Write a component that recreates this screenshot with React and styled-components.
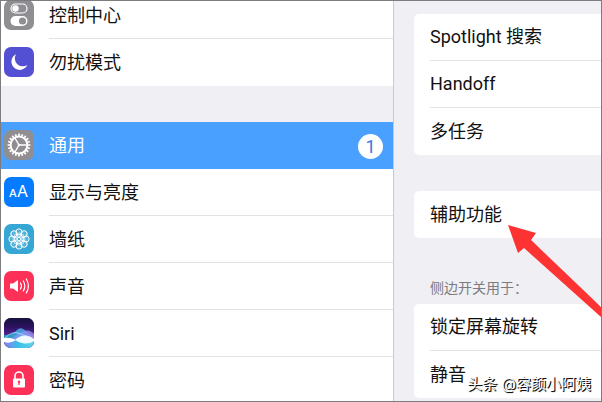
import React from "react";
import styled, { createGlobalStyle } from "styled-components";

const sidebarGroups = [
    [
        { id: "control", title: "控制中心", icon: ControlIcon, color: "#8f8e93" },
        { id: "dnd", title: "勿扰模式", icon: MoonIcon, color: "#5450d3" },
    ],
    [
        { id: "general", title: "通用", icon: GearIcon, color: "#918e92", badge: 1 },
        { id: "display", title: "显示与亮度", icon: DisplayIcon, color: "#057bff" },
        { id: "wallpaper", title: "墙纸", icon: WallpaperIcon, color: "#36a6d4" },
        { id: "sound", title: "声音", icon: SoundIcon, color: "#fd3058" },
        { id: "siri", title: "Siri", icon: SiriIcon, color: "#14103a" },
        { id: "passcode", title: "密码", icon: LockIcon, color: "#fd3058" },
    ],
];

const detailGroups = [
    { items: ["Spotlight 搜索", "Handoff", "多任务"] },
    { items: ["辅助功能"] },
    { caption: "侧边开关用于：", items: ["锁定屏幕旋转", "静音"] },
];

export default function App() {
    return (
        <>
            <GlobalStyle />
            <Screen>
                <Sidebar>
                    {sidebarGroups.map((group, index) => (
                        <SidebarGroup key={index}>
                            {group.map((item) => (
                                <SidebarItem key={item.id} item={item} selected={item.id === "general"} />
                            ))}
                        </SidebarGroup>
                    ))}
                </Sidebar>
                <Detail>
                    {detailGroups.map((group, index) => (
                        <section key={index}>
                            {group.caption ? <Caption>{group.caption}</Caption> : <Spacer $first={index === 0} />}
                            <Card>
                                {group.items.map((title) => (
                                    <CardRow key={title} href="#">{title}</CardRow>
                                ))}
                            </Card>
                        </section>
                    ))}
                </Detail>
                <Arrow viewBox="0 0 94 94" aria-hidden="true">
                    <path d="M0 1 L28 9 L23 16 L94 84 V94 L16 24 L10 29 Z" fill="#fd3233" />
                </Arrow>
                <Watermark>头条 @容颜小阿姨</Watermark>
            </Screen>
        </>
    );
}

function SidebarItem({ item, selected }) {
    const Icon = item.icon;
    return (
        <ItemLink href={`#${item.id}`} $selected={selected} aria-current={selected ? "page" : undefined}>
            <IconBox $color={item.color}>
                <Icon />
            </IconBox>
            <ItemBody>
                <span>{item.title}</span>
                {item.badge && <Badge>{item.badge}</Badge>}
            </ItemBody>
        </ItemLink>
    );
}

function ControlIcon() {
    return (
        <svg viewBox="0 0 30 30" fill="none" stroke="#fff">
            <rect x="7" y="4" width="16" height="9" rx="4.5" strokeWidth="1.2" />
            <circle cx="11.5" cy="8.5" r="3.2" fill="#fff" stroke="none" />
            <rect x="6.5" y="16" width="17" height="10" rx="5" fill="#fff" stroke="none" />
            <circle cx="18.5" cy="21" r="3.6" fill="#8f8e93" stroke="none" />
        </svg>
    );
}

function MoonIcon() {
    return (
        <svg viewBox="0 0 30 30">
            <path d="M12 7.2 A8.3 8.3 0 1 0 23.3 18 A8 8 0 0 1 12 7.2 Z" fill="#fff" />
        </svg>
    );
}

function GearIcon() {
    const teeth = Array.from({ length: 20 }, (_, i) => i * 18);
    return (
        <svg viewBox="0 0 30 30" fill="none" stroke="#fff">
            {teeth.map((angle) => (
                <path key={angle} d="M15 3.6 V6" strokeWidth="1.7" transform={`rotate(${angle} 15 15)`} />
            ))}
            <circle cx="15" cy="15" r="8.4" strokeWidth="2" />
            {[90, 210, 330].map((angle) => (
                <path key={angle} d="M15 15 V7" strokeWidth="1.3" transform={`rotate(${angle} 15 15)`} />
            ))}
            <circle cx="15" cy="15" r="1.3" fill="#fff" stroke="none" />
        </svg>
    );
}

function DisplayIcon() {
    return (
        <svg viewBox="0 0 30 30" fill="#fff" fontFamily="Inter, sans-serif">
            <text x="5" y="20" fontSize="11" fontWeight="500">A</text>
            <text x="13" y="20" fontSize="16">A</text>
        </svg>
    );
}

function WallpaperIcon() {
    const petals = Array.from({ length: 8 }, (_, i) => i * 45);
    return (
        <svg viewBox="0 0 30 30" fill="none" stroke="#fff" strokeWidth="1">
            <circle cx="15" cy="15" r="9" fill="#fff" fillOpacity="0.15" stroke="none" />
            {petals.map((angle) => (
                <g key={angle} transform={`rotate(${angle} 15 15)`}>
                    <circle cx="15" cy="7.9" r="3" />
                    <ellipse cx="15" cy="11.6" rx="1.6" ry="2.8" strokeWidth="0.6" />
                </g>
            ))}
            <circle cx="15" cy="15" r="1.6" fill="#36a6d4" strokeWidth="0.8" />
        </svg>
    );
}

function SoundIcon() {
    return (
        <svg viewBox="0 0 30 30" fill="none" stroke="#fff" strokeLinecap="round">
            <path d="M6 12.5 H9 L14 9 V21 L9 17.5 H6 Z" fill="#fff" stroke="none" />
            <path d="M16.5 12 Q18.5 15 16.5 18" strokeWidth="1.2" />
            <path d="M19.3 10 Q22.3 15 19.3 20" strokeWidth="1.2" />
            <path d="M22.3 8 Q26.5 15 22.3 22" strokeWidth="1.2" />
        </svg>
    );
}

function SiriIcon() {
    return (
        <svg viewBox="0 0 30 30">
            <defs>
                <linearGradient id="siriSky" x1="0" y1="0" x2="0" y2="1">
                    <stop offset="0" stopColor="#15123f" />
                    <stop offset="0.3" stopColor="#2c1260" />
                    <stop offset="0.6" stopColor="#5b2596" />
                </linearGradient>
                <linearGradient id="siriLeft" x1="0" y1="0" x2="1" y2="0">
                    <stop offset="0" stopColor="#1fa5b5" />
                    <stop offset="0.5" stopColor="#3fb4ea" />
                    <stop offset="1" stopColor="#8a62e0" />
                </linearGradient>
                <linearGradient id="siriRight" x1="0" y1="0" x2="1" y2="1">
                    <stop offset="0" stopColor="#5fa0f4" />
                    <stop offset="1" stopColor="#d08af0" />
                </linearGradient>
                <linearGradient id="siriBase" x1="0" y1="0" x2="1" y2="0">
                    <stop offset="0" stopColor="#8f7bec" />
                    <stop offset="0.45" stopColor="#3bbde8" />
                    <stop offset="1" stopColor="#5bd6ea" />
                </linearGradient>
            </defs>
            <rect width="30" height="30" fill="url(#siriSky)" />
            <path d="M0 17 Q9 17 13 12 Q17 8 22 13 Q26 17 30 18 V30 H0 Z" fill="url(#siriLeft)" opacity="0.85" />
            <path d="M6 22 Q14 15 20 13 Q26 11 30 16 V30 H6 Z" fill="url(#siriRight)" opacity="0.75" />
            <path d="M0 22 Q8 26 13 22 Q21 28 30 22 V30 H0 Z" fill="url(#siriBase)" />
            <path d="M0 20 Q6 19 12 22 Q6 26 0 24 Z" fill="#fff" />
            <path d="M11 22 Q16 17 22 17.5 Q27 18 30 21 V23 Q26 26 20 25.5 Q15 25 11 22 Z" fill="#effaff" />
            <path d="M1 20 Q8 13 14 15 Q19 17 23 18" fill="none" stroke="#a9e4ff" strokeWidth="0.8" />
        </svg>
    );
}

function LockIcon() {
    return (
        <svg viewBox="0 0 30 30">
            <path d="M11 14 V11 A4 4 0 0 1 19 11 V14" fill="none" stroke="#fff" strokeWidth="1.6" />
            <rect x="9" y="13.5" width="12" height="9" rx="1" fill="#fff" />
            <path d="M15 16 V20" stroke="#fd3058" strokeWidth="1.3" />
            <circle cx="15" cy="16.8" r="1.2" fill="#fd3058" />
        </svg>
    );
}

const GlobalStyle = createGlobalStyle`
  * {
    box-sizing: border-box;
  }
  body {
    margin: 0;
    font-family: Roboto, "Noto Sans CJK SC", sans-serif;
    font-size: 18px;
    line-height: 24px;
    color: #111;
  }
`;

const Screen = styled.main`
  position: relative;
  display: grid;
  grid-template-columns: 393fr 207fr;
  height: 100vh;
  overflow: hidden;
  border: 1px solid #7d7d7f;
  background-color: #efeff4;
`;

const Sidebar = styled.nav`
  display: flex;
  flex-direction: column;
  gap: 36px;
  /* the list is scrolled a little under the top edge */
  margin-top: -9px;
  border-right: 1px solid #c9c9cd;
`;

const SidebarGroup = styled.div`
  background-color: #fff;
`;

const ItemBody = styled.span`
  flex: 1;
  display: flex;
  align-items: center;
  justify-content: space-between;
  padding: 2px 10px 0 0;
  border-bottom: 1px solid #e2e2e5;
`;

const ItemLink = styled.a`
  display: flex;
  gap: 15px;
  height: 47px;
  padding-left: 3px;
  color: ${({ $selected }) => ($selected ? "#fff" : "#111")};
  background-color: ${({ $selected }) => ($selected ? "#4aa0fe" : "transparent")};
  text-decoration: none;
  &:last-child ${ItemBody} {
    border-bottom-color: transparent;
  }
  ${ItemBody} {
    ${({ $selected }) => $selected && "border-bottom-color: transparent;"}
  }
`;

const IconBox = styled.span`
  width: 30px;
  height: 30px;
  margin-top: 8px;
  border-radius: 7px;
  overflow: hidden;
  background-color: ${({ $color }) => $color};
  svg {
    display: block;
    width: 100%;
    height: 100%;
  }
`;

const Badge = styled.span`
  width: 25px;
  height: 25px;
  border-radius: 50%;
  line-height: 25px;
  text-align: center;
  color: #3a78e0;
  background-color: #fff;
`;

const Detail = styled.div`
  padding-left: 20px;
`;

const Spacer = styled.div`
  height: ${({ $first }) => ($first ? "13px" : "36px")};
`;

const Caption = styled.h2`
  margin: 0;
  padding: 40px 0 6px 16px;
  font-size: 14px;
  font-weight: 400;
  line-height: 20px;
  color: #7c7c82;
`;

const Card = styled.div`
  padding-left: 16px;
  border-radius: 5px 0 0 5px;
  background-color: #fff;
`;

const CardRow = styled.a`
  display: flex;
  align-items: center;
  height: 47px;
  color: #111;
  text-decoration: none;
  border-bottom: 1px solid #e2e2e5;
  &:last-child {
    border-bottom: none;
  }
`;

const Arrow = styled.svg`
  position: absolute;
  top: 223px;
  right: -1px;
  width: 94px;
  height: 94px;
  pointer-events: none;
`;

const Watermark = styled.p`
  position: absolute;
  right: 10px;
  bottom: 5px;
  margin: 0;
  font-family: Inter, "Noto Sans CJK SC", sans-serif;
  font-size: 15px;
  color: #fff;
  text-shadow: 1px 1px 0 #111, 1px 1px 1px #444;
`;
